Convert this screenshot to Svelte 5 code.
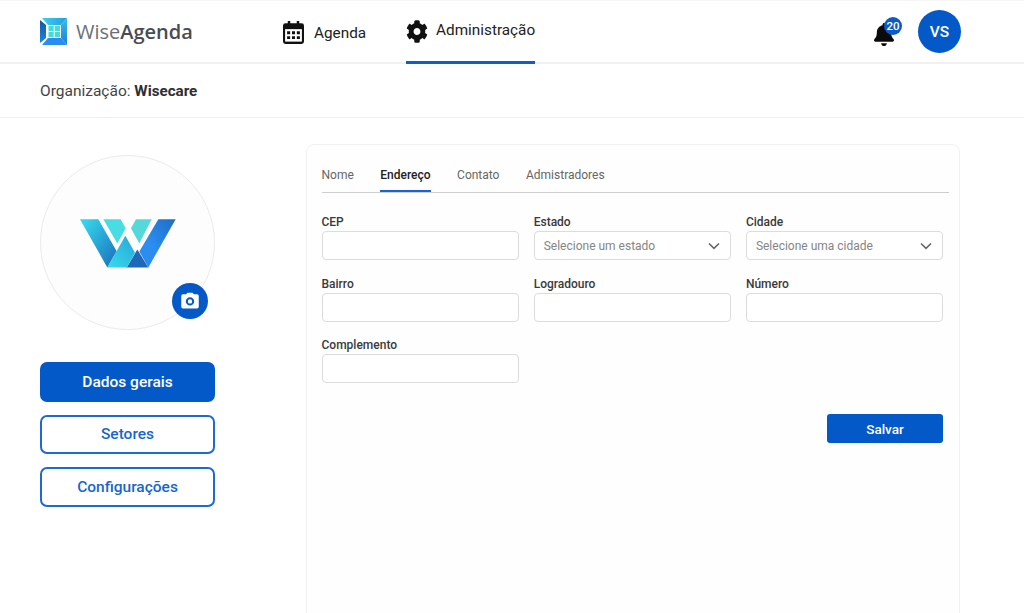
<script lang="ts">
  const tabs = ['Nome', 'Endereço', 'Contato', 'Admistradores'];
  const active = 'Endereço';
  const fields = [
    { label: 'CEP' },
    { label: 'Estado', placeholder: 'Selecione um estado' },
    { label: 'Cidade', placeholder: 'Selecione uma cidade' },
    { label: 'Bairro' },
    { label: 'Logradouro' },
    { label: 'Número' },
    { label: 'Complemento' }
  ];
  const menu = ['Dados gerais', 'Setores', 'Configurações'];
</script>

<div class="page">
  <header class="top">
    <div class="brand">
      <svg width="27" height="27" viewBox="0 0 27 27">
        <defs>
          <linearGradient id="lg1" x1="0" y1="0" x2="0" y2="1"><stop offset="0" stop-color="#16579f" /><stop offset="1" stop-color="#1c86e0" /></linearGradient>
          <linearGradient id="lg2" x1="0" y1="0" x2="1" y2="0"><stop offset="0" stop-color="#3fd0ea" /><stop offset="1" stop-color="#1f9fe0" /></linearGradient>
          <linearGradient id="lg3" x1="0" y1="0" x2="0" y2="1"><stop offset="0" stop-color="#35bfe8" /><stop offset="1" stop-color="#1c7fd8" /></linearGradient>
        </defs>
        <polygon points="0,2 6,7 6,20 0,25" fill="url(#lg1)" />
        <polygon points="2,0 27,0 21,7 8,7" fill="url(#lg2)" />
        <polygon points="27,0 27,27 21,20 21,7" fill="url(#lg3)" />
        <polygon points="2,27 8,20 21,20 27,27" fill="#2b8bf0" />
        <rect x="8.5" y="8" width="11.500" height="11" fill="#45dcd8" />
        <path d="M14.200 8v11M8.500 13.500h11.500" stroke="#fff" stroke-width="1" />
      </svg>
      <span class="wordmark">Wise<b>Agenda</b></span>
    </div>

    <nav class="nav">
      <a class="nav-item" href="#agenda">
        <svg width="21" height="23" viewBox="0 0 22 24" preserveAspectRatio="none">
          <path fill="#111" d="M5 0h2.6v2.4h6.8V0H17v2.4h2.4A2.6 2.6 0 0 1 22 5v16.4a2.6 2.6 0 0 1-2.6 2.6H2.6A2.6 2.6 0 0 1 0 21.400V5a2.6 2.6 0 0 1 2.600-2.600H5z" />
          <path fill="#fff" d="M2.200 8.500h17.600v13H2.200z" />
          <path fill="#111" d="M4.300 10.800h3.200v3h-3.200zM9.400 10.800h3.200v3H9.400zM14.500 10.800h3.200v3h-3.200zM4.300 15.800h3.200v3h-3.200zM9.400 15.800h3.200v3H9.400zM14.500 15.800h3.200v3h-3.200z" />
        </svg>
        <span>Agenda</span>
      </a>
      <a class="nav-item current" href="#admin">
        <svg class="gear" width="22" height="23" viewBox="0 0 512 512" preserveAspectRatio="none">
          <path fill="#111" d="M487.400 315.700l-42.600-24.600c4.300-23.200 4.300-47 0-70.200l42.600-24.600c4.900-2.800 7.100-8.600 5.500-14-11.100-35.600-30-67.800-54.700-94.600-3.800-4.100-10-5.100-14.800-2.300L380.800 110c-17.900-15.400-38.500-27.300-60.800-35.100V25.800c0-5.600-3.900-10.500-9.400-11.700-36.700-8.200-74.300-7.800-109.200 0-5.500 1.200-9.400 6.100-9.400 11.700V75c-22.200 7.900-42.800 19.800-60.800 35.100L88.700 85.500c-4.900-2.800-11-1.900-14.800 2.300-24.700 26.700-43.600 58.900-54.700 94.600-1.700 5.400.6 11.200 5.500 14L67.300 221c-4.300 23.200-4.300 47 0 70.200l-42.600 24.600c-4.900 2.800-7.100 8.600-5.500 14 11.100 35.600 30 67.800 54.700 94.600 3.800 4.100 10 5.100 14.800 2.300l42.600-24.600c17.900 15.400 38.500 27.300 60.800 35.100v49.200c0 5.600 3.900 10.500 9.400 11.700 36.700 8.200 74.300 7.800 109.200 0 5.500-1.200 9.400-6.100 9.400-11.700v-49.200c22.200-7.900 42.800-19.800 60.800-35.100l42.600 24.600c4.900 2.800 11 1.900 14.800-2.300 24.700-26.700 43.600-58.900 54.700-94.600 1.500-5.500-.7-11.300-5.600-14.100zM256 336c-44.100 0-80-35.900-80-80s35.900-80 80-80 80 35.900 80 80-35.900 80-80 80z" />
        </svg>
        <span>Administração</span>
      </a>
    </nav>

    <div class="user">
      <div class="bell">
        <svg width="20" height="23" viewBox="0 0 448 512" preserveAspectRatio="none">
          <path fill="#0b0b0b" d="M224 512c35.320 0 63.970-28.650 63.970-64H160.030c0 35.350 28.650 64 63.970 64zm215.390-149.710c-19.320-20.760-55.470-51.990-55.470-154.290 0-77.700-54.480-139.900-127.940-155.160V32c0-17.670-14.320-32-31.980-32s-31.980 14.330-31.980 32v20.840C118.560 68.100 64.080 130.300 64.080 208c0 102.300-36.150 133.530-55.470 154.290-6 6.450-8.660 14.160-8.610 21.710.11 16.400 12.980 32 32.100 32h383.800c19.120 0 32-15.600 32.100-32 .05-7.550-2.610-15.270-8.610-21.710z" />
        </svg>
        <span class="badge">20</span>
      </div>
      <div class="avatar">VS</div>
    </div>
  </header>

  <div class="org">Organização: <b>Wisecare</b></div>

  <main class="content">
    <aside class="side">
      <div class="photo">
        <svg class="mark" width="96" height="49" viewBox="0 0 288 146">
          <defs>
            <linearGradient id="w1" x1="0" y1="0" x2="1" y2="1"><stop offset="0.1" stop-color="#35d3ea" /><stop offset="1" stop-color="#1a6dbb" /></linearGradient>
            <linearGradient id="w2" x1="0" y1="1" x2="1" y2="0"><stop offset="0" stop-color="#36dcec" /><stop offset="1" stop-color="#2aa5d8" /></linearGradient>
            <linearGradient id="w3" x1="1" y1="0" x2="0" y2="1"><stop offset="0" stop-color="#1f6cc4" /><stop offset="0.6" stop-color="#2b8df0" /></linearGradient>
          </defs>
          <polygon points="0,0 55,0 110,96 82,145" fill="url(#w1)" />
          <polygon points="70,0 122,0 137,27 112,73" fill="#48dde2" />
          <polygon points="168,0 215,0 178,73 153,27" fill="#55d8da" />
          <polygon points="140,145 205,145 172,91" fill="#1d68b8" />
          <polygon points="82,145 136,50 165,101 140,145" fill="url(#w2)" />
          <polygon points="235,0 287,0 205,145 178,97" fill="url(#w3)" />
        </svg>
        <button class="camera" aria-label="Alterar foto">
          <svg width="20" height="20" viewBox="0 0 24 24">
            <path fill="#fff" d="M9 2 7.200 4H3.500A2 2 0 0 0 1.500 6v13a2 2 0 0 0 2 2h17a2 2 0 0 0 2-2V6a2 2 0 0 0-2-2h-3.700L15 2zm3 5.500a5 5 0 1 1 0 10 5 5 0 0 1 0-10zm0 2.400a2.600 2.600 0 1 0 0 5.200 2.600 2.600 0 0 0 0-5.200z" />
          </svg>
        </button>
      </div>
      <div class="menu">
        {#each menu as item, i}
          <button class="menu-btn" class:filled={i === 0}>{item}</button>
        {/each}
      </div>
    </aside>

    <section class="card">
      <div class="tabs">
        {#each tabs as t}
          <span class="tab" class:on={t === active}>{t}</span>
        {/each}
      </div>
      <div class="form">
        {#each fields as f}
          <div class="field">
            <span class="label">{f.label}</span>
            <div class="input">
              {#if f.placeholder}
                <span>{f.placeholder}</span>
                <svg width="12" height="8" viewBox="0 0 12 8"><path d="M1 1.500 6 6.300l5-4.800" fill="none" stroke="#666" stroke-width="1.600" /></svg>
              {/if}
            </div>
          </div>
        {/each}
      </div>
      <div class="actions"><button class="save">Salvar</button></div>
    </section>
  </main>
</div>

<style>
  :global(body) { margin: 0; background: #fff; }
  .page { height: 613px; overflow: hidden; font-family: Roboto, "Liberation Sans", sans-serif; color: #333; }

  .top { height: 61px; display: flex; align-items: center; padding: 0 63px 0 40px; border-top: 1px solid #f6f6f6; border-bottom: 2px solid #f1f1f1; }
  .brand { display: flex; align-items: center; gap: 9px; width: 243px; }
  .wordmark { font-family: "Open Sans", sans-serif; font-size: 20px; color: #6b7078; }
  .wordmark b { font-weight: 600; color: #474c54; }

  .nav { display: flex; align-self: stretch; gap: 40px; }
  .nav-item { display: flex; align-items: center; gap: 10px; color: #222; text-decoration: none; font-size: 15.3px; height: 63px; box-sizing: border-box; }
  .nav-item.current { border-bottom: 3px solid #0f5fc9; padding-bottom: 2px; gap: 8px; }
  .gear { margin-top: 2px; }

  .user { margin-left: auto; display: flex; align-items: center; gap: 24px; }
  .bell { position: relative; width: 20px; height: 23px; margin-top: 6px; }
  .badge { position: absolute; top: -6px; left: 10px; width: 18px; height: 18px; border-radius: 50%; background: #0a5bc8; color: #fff; font-size: 11.5px; font-weight: 500; display: flex; align-items: center; justify-content: center; }
  .avatar { width: 43px; height: 43px; border-radius: 50%; background: #0459c9; color: #fff; font-size: 15.5px; font-weight: 500; display: flex; align-items: center; justify-content: center; }

  .org { height: 54px; box-sizing: border-box; padding: 0 40px; display: flex; align-items: center; font-size: 15.5px; color: #444; border-bottom: 1px solid #eee; white-space: pre; }
  .org b { font-weight: 700; font-size: 15.2px; color: #2f2f2f; }

  .content { display: flex; padding: 26px 0 0 40px; gap: 91px; }
  .side { width: 175px; padding-top: 11px; }
  .photo { position: relative; width: 175px; height: 175px; box-sizing: border-box; border: 1px solid #ebebeb; border-radius: 50%; background: #fdfdfd; display: flex; align-items: center; justify-content: center; }
  .mark { margin-top: 1px; }
  .camera { position: absolute; right: 6px; bottom: 10px; width: 36px; height: 36px; padding: 0; border: none; border-radius: 50%; background: #0459c9; display: flex; align-items: center; justify-content: center; }

  .menu { display: flex; flex-direction: column; gap: 13px; margin-top: 32px; }
  .menu-btn { height: 39.5px; padding: 0; border: 2px solid #1d6ad2; border-radius: 7px; background: #fff; color: #1766cf; font: 500 15.5px Roboto, sans-serif; }
  .menu-btn.filled { background: #0459c9; border-color: #0459c9; color: #fff; }

  .card { width: 654px; height: 520px; box-sizing: border-box; border: 1.5px solid #f1f1f1; border-radius: 8px; padding: 14px 10px 0 14.5px; background: #fefefe; }
  .tabs { display: flex; gap: 26.5px; height: 33px; border-bottom: 1px solid #cfcfcf; font-size: 12px; color: #666; }
  .tab { height: 33px; box-sizing: border-box; line-height: 33px; }
  .tab.on { color: #222; font-weight: 500; border-bottom: 2px solid #1766cf; }

  .form { display: grid; grid-template-columns: repeat(3, 197px); column-gap: 15.2px; row-gap: 16.5px; margin-top: 22px; }
  .field { display: flex; flex-direction: column; gap: 1px; }
  .label { font-size: 12px; font-weight: 500; color: #3a3a3a; line-height: 15px; }
  .input { height: 29px; box-sizing: border-box; border: 1px solid #dcdcdc; border-radius: 4px; background: #fff; display: flex; align-items: center; justify-content: space-between; padding: 0 10px 0 9px; font-size: 12px; color: #858585; }

  .actions { width: 621.5px; display: flex; justify-content: flex-end; margin-top: 31px; }
  .save { width: 116px; height: 29px; padding: 0; border: none; border-radius: 3px; background: #0459c9; color: #fff; font: 500 13.5px Roboto, sans-serif; }
</style>
